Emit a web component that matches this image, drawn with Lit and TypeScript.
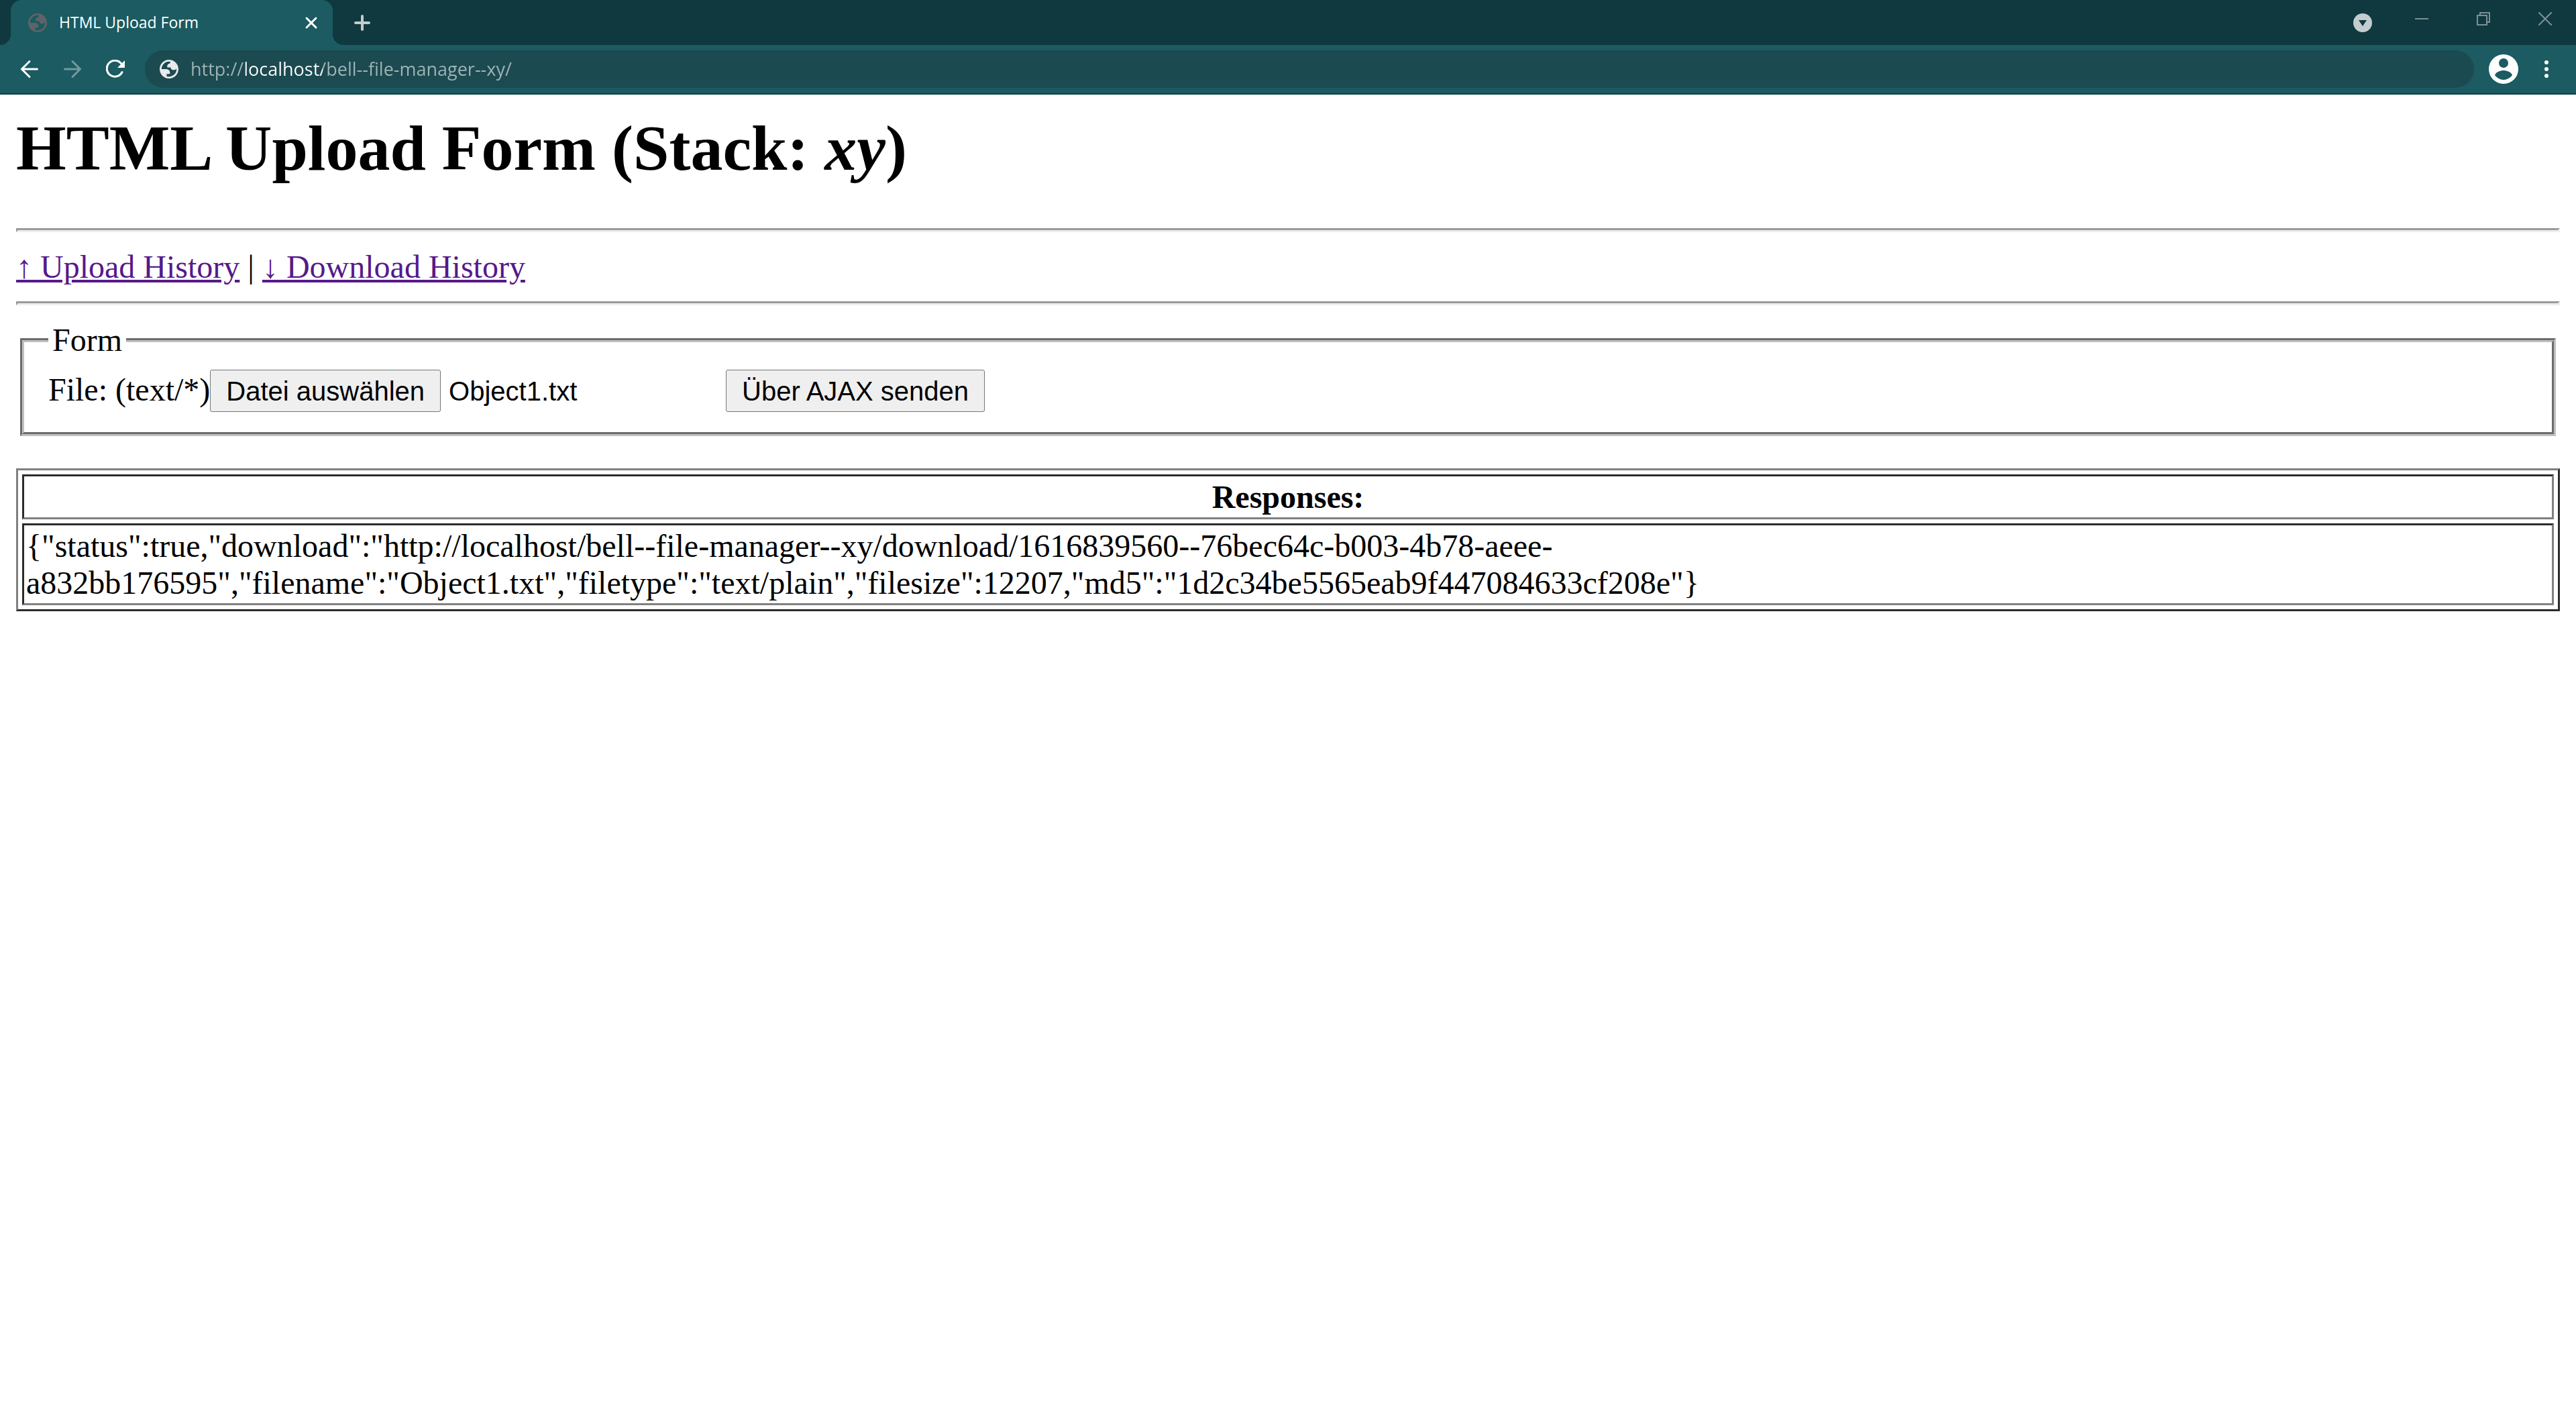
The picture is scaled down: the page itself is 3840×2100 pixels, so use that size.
import { LitElement, html, css, svg } from "lit";
import { customElement, query, state } from "lit/decorators.js";

const globe = svg`<path d="M12 2c5.523 0 10 4.477 10 10s-4.477 10-10 10S2 17.523 2 12 6.477 2 12 2zM4 12h4.4c3.407.022 4.922 1.73 4.543 5.127H9.488v2.47a8.004 8.004 0 0 0 10.498-8.083C19.327 12.504 18.332 13 17 13c-2.137 0-3.206-.916-3.206-2.75h-3.748c-.274-2.728.683-4.092 2.87-4.092 0-.975.327-1.597.811-1.97A8.004 8.004 0 0 0 4 12z" fill-rule="evenodd"/>`;

@customElement("browser-chrome")
export class BrowserChrome extends LitElement {
  static styles = css`
    :host {
      display: block;
      font-family: "Open Sans", "Noto Sans", sans-serif;
      background: #1b5b61;
      border-bottom: 2px solid #113f45;
    }
    button {
      display: grid;
      place-items: center;
      padding: 0;
      border: 0;
      background: none;
      color: #fff;
      flex: none;
    }
    svg {
      display: block;
    }
    .strip {
      display: flex;
      align-items: stretch;
      height: 67px;
      padding-left: 16px;
      background: #0f393f;
    }
    .tab {
      position: relative;
      display: flex;
      align-items: center;
      box-sizing: border-box;
      width: 480px;
      padding: 0 20px 0 26px;
      gap: 18px;
      border-radius: 16px 16px 0 0;
      background: #1b5b61;
      color: #fff;
      font-size: 23px;
      line-height: 32px;
    }
    .tab::before,
    .tab::after {
      content: "";
      position: absolute;
      bottom: 0;
      width: 16px;
      height: 16px;
    }
    .tab::before {
      right: 100%;
      background: radial-gradient(circle at 0 0, transparent 16px, #1b5b61 16px);
    }
    .tab::after {
      left: 100%;
      background: radial-gradient(circle at 100% 0, transparent 16px, #1b5b61 16px);
    }
    .favicon {
      color: #5f6368;
      flex: none;
    }
    .title {
      flex: 1;
      padding-bottom: 2px;
      white-space: nowrap;
    }
    .close {
      width: 24px;
      height: 24px;
    }
    .new {
      width: 56px;
      margin-left: 16px;
      color: #c3cdcf;
    }
    .window {
      display: flex;
      margin-left: auto;
      color: #7b9194;
    }
    .window button {
      width: 92px;
      color: inherit;
      padding-bottom: 11px;
    }
    .window .search {
      width: 56px;
      margin-right: 14px;
      padding-bottom: 0;
      color: #c3cdcf;
    }
    .toolbar {
      display: flex;
      align-items: center;
      height: 56px;
      padding: 8px 16px;
    }
    .toolbar button {
      width: 56px;
      height: 56px;
    }
    .nav {
      display: flex;
      gap: 8px;
      margin-right: 16px;
    }
    .nav button:disabled {
      color: #739a9e;
    }
    .address {
      display: flex;
      flex: 1;
      align-items: center;
      gap: 18px;
      height: 56px;
      padding-left: 22px;
      border-radius: 28px;
      background: #1b4a50;
      color: #e8eaed;
    }
    .url {
      flex: 1;
      padding: 0;
      border: 0;
      outline: 0;
      font: 27px / 36px "Open Sans", "Noto Sans", sans-serif;
      color: transparent;
      background: linear-gradient(90deg, #a0b4b6 82px, #fff 82px, #fff 197px, #a0b4b6 197px);
      -webkit-background-clip: text;
      background-clip: text;
      caret-color: #fff;
    }
    .actions {
      display: flex;
      gap: 8px;
      margin: 0 0 0 16px;
    }
  `;

  render() {
    return html`
      <div class="strip">
        <div class="tab">
          <svg class="favicon" width="28" height="28" viewBox="2 2 20 20" fill="currentColor">${globe}</svg>
          <span class="title">HTML Upload Form</span>
          <button class="close" aria-label="Close tab">
            <svg width="24" height="24" viewBox="0 0 24 24" fill="none" stroke="currentColor" stroke-width="3" stroke-linecap="round"><path d="M5 5l14 14M19 5L5 19" /></svg>
          </button>
        </div>
        <button class="new" aria-label="New tab">
          <svg width="24" height="24" viewBox="0 0 24 24" fill="none" stroke="currentColor" stroke-width="4" stroke-linecap="round"><path d="M12 2v20M2 12h20" /></svg>
        </button>
        <div class="window">
          <button class="search" aria-label="Search tabs">
            <svg width="28" height="28" viewBox="0 0 28 28"><circle cx="14" cy="14" r="14" fill="currentColor" /><path d="M8 10h12l-6 9z" fill="#0f393f" /></svg>
          </button>
          <button aria-label="Minimise">
            <svg width="20" height="20" viewBox="0 0 20 20" stroke="currentColor" stroke-width="2"><path d="M0 10h20" /></svg>
          </button>
          <button aria-label="Restore">
            <svg width="20" height="20" viewBox="0 0 20 20" fill="none" stroke="currentColor" stroke-width="2"><path d="M1 5h14v14H1zM5 5V1h14v14h-4" /></svg>
          </button>
          <button aria-label="Close window">
            <svg width="20" height="20" viewBox="0 0 20 20" stroke="currentColor" stroke-width="2"><path d="M0 0l20 20M20 0L0 20" /></svg>
          </button>
        </div>
      </div>
      <div class="toolbar">
        <div class="nav">
          <button aria-label="Back">
            <svg width="28" height="28" viewBox="0 0 28 28" fill="none" stroke="currentColor" stroke-width="3" stroke-linecap="round"><path d="M25.500 14H2.500M14 2.500L2.500 14 14 25.500" /></svg>
          </button>
          <button aria-label="Forward" disabled>
            <svg width="28" height="28" viewBox="0 0 28 28" fill="none" stroke="currentColor" stroke-width="3" stroke-linecap="round"><path d="M2.500 14h23M14 2.500L25.500 14 14 25.500" /></svg>
          </button>
          <button aria-label="Reload">
            <svg width="28" height="28" viewBox="0 0 28 28" fill="none" stroke="currentColor" stroke-width="3" stroke-linecap="round"><path d="M24 18.500A12 12 0 1 1 22.500 5.500" /><path d="M28 1v11H17z" fill="currentColor" stroke="none" /></svg>
          </button>
        </div>
        <div class="address">
          <svg width="28" height="28" viewBox="2 2 20 20" fill="currentColor">${globe}</svg>
          <input class="url" type="text" aria-label="Address" spellcheck="false" value="http://localhost/bell--file-manager--xy/" />
        </div>
        <div class="actions">
          <button aria-label="Profile">
            <svg width="44" height="44" viewBox="0 0 44 44"><circle cx="22" cy="22" r="22" fill="currentColor" /><circle cx="22" cy="13" r="7" fill="#1b5b61" /><path d="M9 31c2-5 8-7 13-7s11 2 13 7c-3 4-8 7-13 7S12 35 9 31z" fill="#1b5b61" /></svg>
          </button>
          <button aria-label="Menu">
            <svg width="28" height="28" viewBox="0 0 28 28" fill="currentColor"><circle cx="14" cy="4" r="3" /><circle cx="14" cy="14" r="3" /><circle cx="14" cy="24" r="3" /></svg>
          </button>
        </div>
      </div>
    `;
  }
}

@customElement("upload-page")
export class UploadPage extends LitElement {
  static styles = css`
    :host {
      display: block;
      padding: 24px;
      font: 48px / 55px "Liberation Serif", "Times New Roman", serif;
      color: #000;
    }
    h1 {
      margin: 0 0 64px;
      font-size: 96px;
      line-height: 111px;
    }
    hr {
      margin: 24px 0;
      border: 3px solid;
      border-color: #9a9a9a #eee #eee #9a9a9a;
    }
    a {
      color: #551a8b;
    }
    form {
      margin-bottom: 48px;
    }
    fieldset {
      margin: 0 6px;
      padding: 17px 36px 30px;
      border: 6px groove #c0c0c0;
    }
    legend {
      padding: 0 6px;
    }
    .row {
      display: flex;
      align-items: baseline;
    }
    button {
      box-sizing: border-box;
      height: 63px;
      padding: 0 23px;
      border: 1px solid #767676;
      border-radius: 3px;
      background: #efefef;
      color: #000;
      font: 40px / 46px "Liberation Sans", Arial, sans-serif;
    }
    .name {
      width: 413px;
      margin-left: 12px;
      font: 40px / 46px "Liberation Sans", Arial, sans-serif;
    }
    table {
      width: 100%;
      border: 3px solid;
      border-color: #808080 #2c2c2c #2c2c2c #808080;
      border-spacing: 6px;
      border-collapse: separate;
    }
    th,
    td {
      padding: 3px;
      border: 3px solid;
      border-color: #2c2c2c #808080 #808080 #2c2c2c;
    }
  `;

  @state() private fileName = "Object1.txt";
  @state() private responses = [
    '{"status":true,"download":"http://localhost/bell--file-manager--xy/download/1616839560--76bec64c-b003-4b78-aeee-a832bb176595","filename":"Object1.txt","filetype":"text/plain","filesize":12207,"md5":"1d2c34be5565eab9f447084633cf208e"}',
  ];
  @query("#file") private file!: HTMLInputElement;

  private onFile() {
    this.fileName = this.file.files?.[0]?.name ?? this.fileName;
  }

  render() {
    return html`
      <h1>HTML Upload Form (Stack: <em>xy</em>)</h1>
      <hr />
      <nav><a href="#upload">↑ Upload History</a> | <a href="#download">↓ Download History</a></nav>
      <hr />
      <form @submit=${(e: Event) => e.preventDefault()}>
        <fieldset>
          <legend>Form</legend>
          <div class="row">
            <label for="file">File: (text/*)</label>
            <input id="file" type="file" accept="text/*" hidden @change=${this.onFile} />
            <button type="button" @click=${() => this.file.click()}>Datei auswählen</button>
            <output class="name" for="file">${this.fileName}</output>
            <button type="submit">Über AJAX senden</button>
          </div>
        </fieldset>
      </form>
      <table>
        <thead>
          <tr><th>Responses:</th></tr>
        </thead>
        <tbody>
          ${this.responses.map((r) => html`<tr><td>${r}</td></tr>`)}
        </tbody>
      </table>
    `;
  }
}

@customElement("app-root")
export class AppRoot extends LitElement {
  static styles = css`
    :host {
      display: block;
      min-height: 100vh;
      background: #fff;
    }
  `;

  render() {
    return html`<browser-chrome></browser-chrome><upload-page></upload-page>`;
  }
}
